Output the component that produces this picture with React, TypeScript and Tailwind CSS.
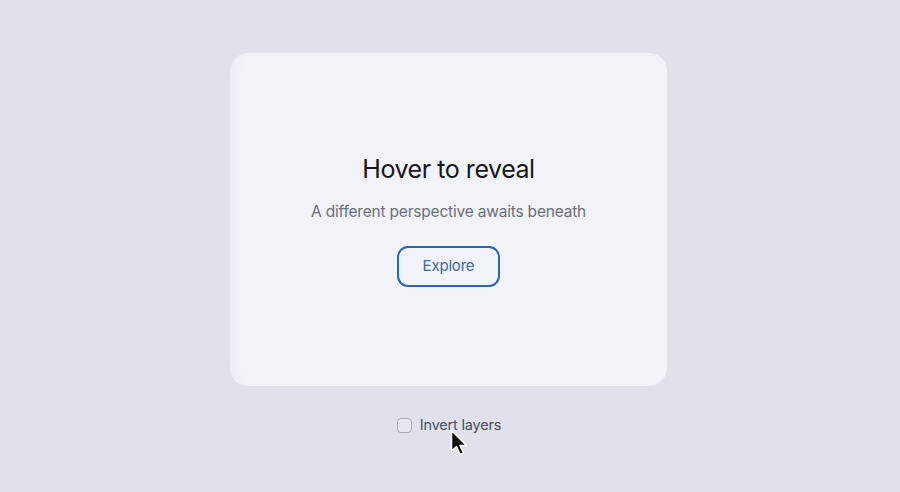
import React from "react";

const Cursor = () => (
  <svg
    width="18"
    height="28"
    viewBox="0 0 18 28"
    className="absolute left-[450px] top-[429px] pointer-events-none"
  >
    <path
      d="M1.5 1.5 L1.5 22 L6.5 17.5 L10 25.5 L13.5 24 L10 16.5 L16.5 16.5 Z"
      fill="#111"
      stroke="#fff"
      strokeWidth="1.5"
      strokeLinejoin="round"
    />
  </svg>
);

export default function App() {
  return (
    <div
      className="relative h-[492px] w-[900px] overflow-hidden bg-[#dfe2eb] flex flex-col items-center pt-[53px]"
      style={{ fontFamily: "Inter, 'Noto Sans', sans-serif" }}
    >
      <div className="ml-[-3px] flex h-[333px] w-[437px] flex-col items-center justify-center rounded-[18px] bg-[#f1f3f9] shadow-[inset_10px_0_20px_-16px_rgba(150,160,185,0.15)]">
        <h1 className="text-[25px] leading-[32px] font-normal tracking-[-0.45px] text-[#16181d]">
          Hover to reveal
        </h1>
        <p className="mt-[15px] text-[15.5px] leading-[24px] tracking-[-0.2px] text-[#6b6f7a]">
          A different perspective awaits beneath
        </p>
        <button className="mt-[22px] h-[41px] w-[103px] rounded-[11px] border-2 border-[#2d65b0] text-[15px] tracking-[-0.2px] text-[#3a6aa8]">
          Explore
        </button>
      </div>
      <label className="mt-[27px] ml-[-2px] flex items-center gap-[8px] text-[14.5px] leading-[24px] tracking-[-0.2px] text-[#4a4f5c]">
        <span className="h-[15px] w-[15px] rounded-[4px] border-[1.5px] border-[#a7abb6] bg-[#e6e9f0]" />
        Invert layers
      </label>
      <Cursor />
    </div>
  );
}
